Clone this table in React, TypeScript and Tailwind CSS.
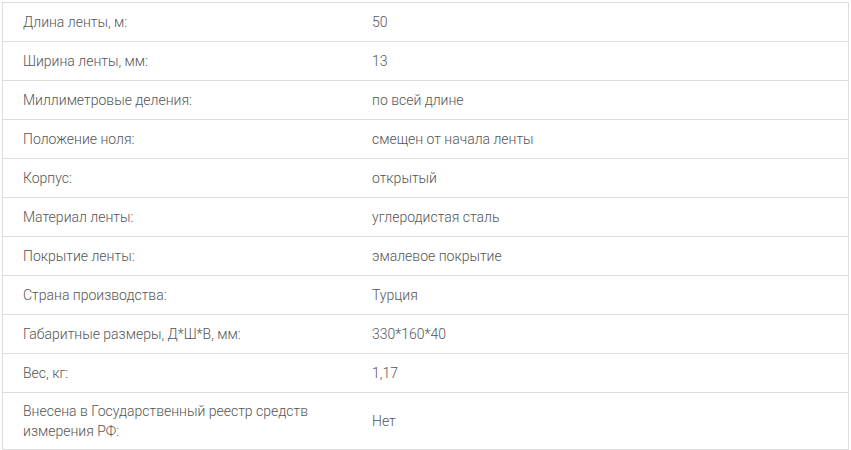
import React from 'react';

const specs: { label: string; value: string }[] = [
    { label: 'Длина ленты, м:', value: '50' },
    { label: 'Ширина ленты, мм:', value: '13' },
    { label: 'Миллиметровые деления:', value: 'по всей длине' },
    { label: 'Положение ноля:', value: 'смещен от начала ленты' },
    { label: 'Корпус:', value: 'открытый' },
    { label: 'Материал ленты:', value: 'углеродистая сталь' },
    { label: 'Покрытие ленты:', value: 'эмалевое покрытие' },
    { label: 'Страна производства:', value: 'Турция' },
    { label: 'Габаритные размеры, Д*Ш*В, мм:', value: '330*160*40' },
    { label: 'Вес, кг:', value: '1,17' },
    { label: 'Внесена в Государственный реестр средств измерения РФ:', value: 'Нет' },
];

export default function App() {
    return (
        <div className="bg-white pt-[2px] pl-[2px] w-[851px] h-[450px] font-['Roboto',sans-serif] font-light text-[14px] text-[#555]">
            <div className="w-[847px] border border-[#ddd]">
                {specs.map((row, i) => {
                    const last = i === specs.length - 1;
                    return (
                        <div key={i} className={`flex items-center ${last ? 'h-[56px]' : 'h-[39px] border-b border-[#ddd]'}`}>
                            <div className="w-[349px] pl-[20px] pr-[20px] leading-[20px]">{row.label}</div>
                            <div className="flex-1 pl-[20px] leading-[20px]">{row.value}</div>
                        </div>
                    );
                })}
            </div>
        </div>
    );
}
